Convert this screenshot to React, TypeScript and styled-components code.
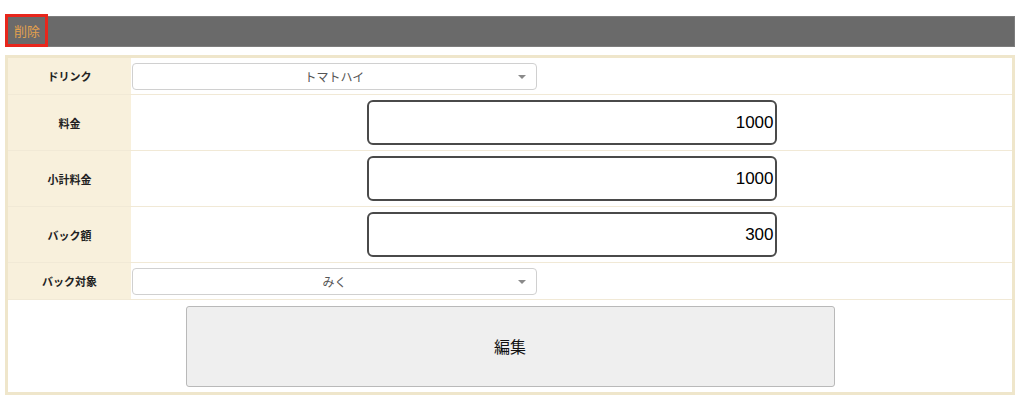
import React from "react";
import styled, { createGlobalStyle } from "styled-components";

const Global = createGlobalStyle`
  html, body { margin: 0; padding: 0; background: #fff; }
  body { font-family: "Noto Sans CJK JP", "Noto Sans", "Liberation Sans", sans-serif; }
  * { box-sizing: border-box; }
`;

const Page = styled.div`
  width: 1024px;
  height: 409px;
  padding: 16px 9px 0 5px;
  overflow: hidden;
`;

const Bar = styled.div`
  height: 31px;
  background: #6a6a6a;
  border: 1px solid #7d7d7d;
  display: flex;
  align-items: center;
`;

const DeleteButton = styled.div`
  height: 33px;
  margin-left: -1px;
  margin-top: -2px;
  padding: 0 5px 0 6px;
  border: 3px solid #e8261c;
  color: #e3a04d;
  font-size: 13px;
  display: flex;
  align-items: center;
`;

const Card = styled.div`
  margin-top: 8px;
  border: 3px solid #efe6cb;
  background: #fff;
`;

const Row = styled.div<{ $h: number }>`
  display: grid;
  grid-template-columns: 123px 1fr;
  height: ${(p) => p.$h}px;
  border-bottom: 1px solid #f1e9d6;
`;

const Label = styled.div`
  background: #f8f0dc;
  display: flex;
  align-items: center;
  justify-content: center;
  font-size: 11px;
  font-weight: 700;
  color: #222;
`;

const SelectCell = styled.div`
  display: flex;
  align-items: center;
  padding-left: 1px;
`;

const Select = styled.div`
  position: relative;
  width: 405px;
  height: 27px;
  border: 1px solid #d0d0d0;
  border-radius: 4px;
  display: flex;
  align-items: center;
  justify-content: center;
  font-size: 12px;
  color: #555;
  background: #fff;
`;

const Caret = styled.span`
  position: absolute;
  right: 10px;
  top: 11px;
  width: 0;
  height: 0;
  border-left: 4px solid transparent;
  border-right: 4px solid transparent;
  border-top: 4px solid #8a8a8a;
`;

const InputCell = styled.div`
  display: flex;
  align-items: center;
  justify-content: center;
`;

const NumberBox = styled.div`
  width: 410px;
  height: 45px;
  border: 2px solid #4a4a4a;
  border-radius: 6px;
  display: flex;
  align-items: center;
  justify-content: flex-end;
  padding-right: 1px;
  font-family: "Liberation Sans", Arial, sans-serif;
  font-size: 17px;
  color: #000;
`;

const ButtonRow = styled.div`
  height: 92px;
  display: flex;
  align-items: center;
  justify-content: center;
`;

const EditButton = styled.div`
  width: 649px;
  height: 81px;
  background: #efefef;
  border: 1px solid #b9b9b9;
  border-radius: 3px;
  display: flex;
  align-items: center;
  justify-content: center;
  font-size: 16px;
  color: #111;
`;

const SelectRow = ({ label, value }: { label: string; value: string }) => (
  <Row $h={37}>
    <Label>{label}</Label>
    <SelectCell>
      <Select>
        {value}
        <Caret />
      </Select>
    </SelectCell>
  </Row>
);

const InputRow = ({ label, value }: { label: string; value: string }) => (
  <Row $h={56}>
    <Label>{label}</Label>
    <InputCell>
      <NumberBox>{value}</NumberBox>
    </InputCell>
  </Row>
);

export default function App() {
  return (
    <Page>
      <Global />
      <Bar>
        <DeleteButton>削除</DeleteButton>
      </Bar>
      <Card>
        <SelectRow label="ドリンク" value="トマトハイ" />
        <InputRow label="料金" value="1000" />
        <InputRow label="小計料金" value="1000" />
        <InputRow label="バック額" value="300" />
        <SelectRow label="バック対象" value="みく" />
        <ButtonRow>
          <EditButton>編集</EditButton>
        </ButtonRow>
      </Card>
    </Page>
  );
}
